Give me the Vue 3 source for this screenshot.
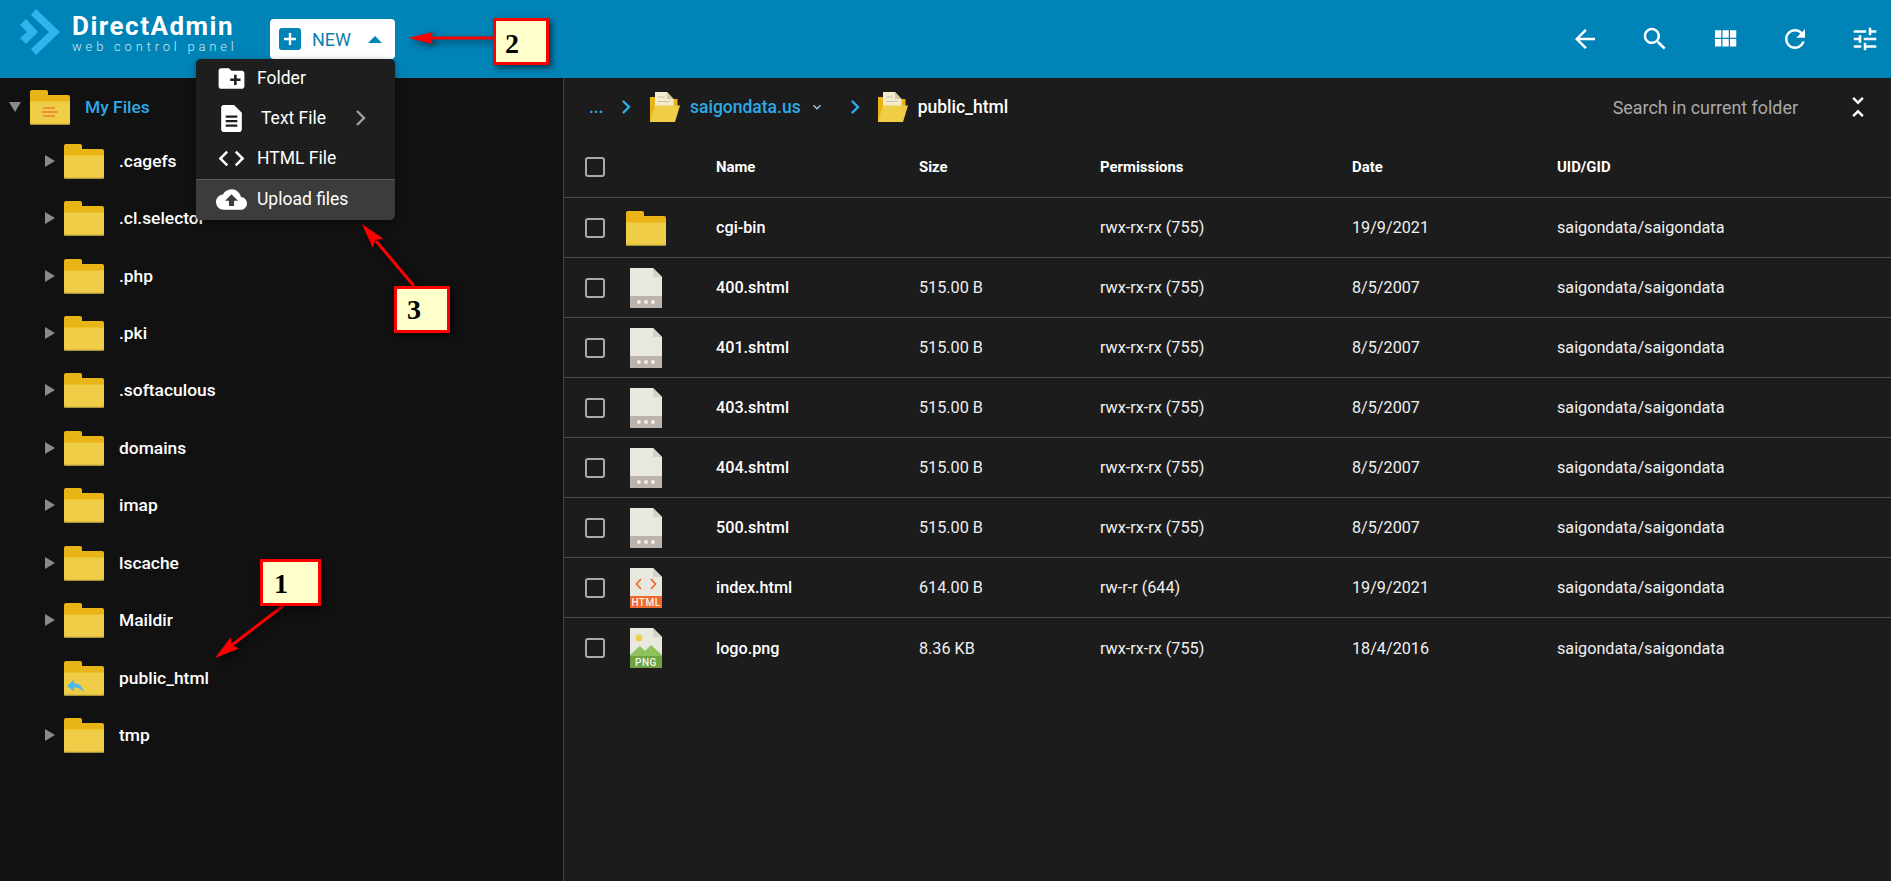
<script setup>
const tree = [
  { name: '.cagefs', arrow: true },
  { name: '.cl.selector', arrow: true },
  { name: '.php', arrow: true },
  { name: '.pki', arrow: true },
  { name: '.softaculous', arrow: true },
  { name: 'domains', arrow: true },
  { name: 'imap', arrow: true },
  { name: 'lscache', arrow: true },
  { name: 'Maildir', arrow: true },
  { name: 'public_html', arrow: false, link: true },
  { name: 'tmp', arrow: true },
]
const perm = 'rwx-rx-rx (755)'
const owner = 'saigondata/saigondata'
const rows = [
  { name: 'cgi-bin', type: 'folder', size: '', perm, date: '19/9/2021' },
  { name: '400.shtml', type: 'doc', size: '515.00 B', perm, date: '8/5/2007' },
  { name: '401.shtml', type: 'doc', size: '515.00 B', perm, date: '8/5/2007' },
  { name: '403.shtml', type: 'doc', size: '515.00 B', perm, date: '8/5/2007' },
  { name: '404.shtml', type: 'doc', size: '515.00 B', perm, date: '8/5/2007' },
  { name: '500.shtml', type: 'doc', size: '515.00 B', perm, date: '8/5/2007' },
  { name: 'index.html', type: 'html', size: '614.00 B', perm: 'rw-r-r (644)', date: '19/9/2021' },
  { name: 'logo.png', type: 'png', size: '8.36 KB', perm, date: '18/4/2016' },
]
const topIcons = [
  'M20 11H7.83l5.59-5.59L12 4l-8 8 8 8 1.41-1.41L7.83 13H20v-2z',
  'M15.5 14h-.79l-.28-.27C15.41 12.59 16 11.11 16 9.5 16 5.91 13.09 3 9.5 3S3 5.91 3 9.5 5.91 16 9.5 16c1.61 0 3.09-.59 4.23-1.57l.27.28v.79l5 4.99L20.49 19l-4.99-5zm-6 0C7.01 14 5 11.99 5 9.5S7.01 5 9.5 5 14 7.01 14 9.5 11.99 14 9.5 14z',
  'M4 11h5V5H4v6zm0 7h5v-6H4v6zm6 0h5v-6h-5v6zm6 0h5v-6h-5v6zm-6-7h5V5h-5v6zm6-6v6h5V5h-5z',
  'M17.65 6.35C16.2 4.9 14.21 4 12 4c-4.42 0-7.99 3.58-7.99 8s3.57 8 7.99 8c3.73 0 6.84-2.55 7.73-6h-2.08c-.82 2.33-3.04 4-5.65 4-3.31 0-6-2.69-6-6s2.69-6 6-6c1.66 0 3.14.69 4.22 1.78L13 11h7V4l-2.35 2.35z',
  'M3 17v2h6v-2H3zM3 5v2h10V5H3zm10 16v-2h8v-2h-8v-2h-2v6h2zM7 9v2H3v2h4v2h2V9H7zm14 4v-2H11v2h10zm-6-4h2V7h4V5h-4V3h-2v6z',
]
</script>

<template>
  <div class="page">
    <svg class="defs" width="0" height="0">
      <symbol id="folder" viewBox="0 0 40 36">
        <path d="M0 3a2 2 0 0 1 2-2h14a2 2 0 0 1 2 2v3h20a2 2 0 0 1 2 2v6H0z" fill="#e9b516" />
        <path d="M0 12.500h40V34a2 2 0 0 1-2 2H2a2 2 0 0 1-2-2z" fill="#f0cd47" />
        <path d="M0 34.800h40V35a1 1 0 0 1-1 1H1a1 1 0 0 1-1-1z" fill="#a8923a" />
      </symbol>
      <symbol id="open" viewBox="0 0 30 30">
        <path d="M0 30V5h5v25z" fill="#e9b516" />
        <path d="M23 7h4.500v8H23z" fill="#e9b516" />
        <path d="M5 0h12l6.500 7V20H5z" fill="#f5ebcf" />
        <path d="M17 0l6.500 7H17z" fill="#d9caa0" />
        <path d="M8 5h7M8 9.500h12" stroke="#c9c2ae" stroke-width="1" />
        <path d="M5 13.500h25L25 30H0z" fill="#f0cd47" />
      </symbol>
      <symbol id="paper" viewBox="0 0 32 40">
        <path d="M0 0h23l9 9v31H0z" fill="#e8e8df" />
        <path d="M23 0l9 9h-9z" fill="#d3d3c8" />
      </symbol>
    </svg>

    <header class="topbar">
      <div class="logo">
        <svg class="logo-mark" viewBox="0 0 40 46">
          <path d="M16 0L40 23 16 46 11 40 29 23 11 6z" fill="#2fb4ee" />
          <path d="M0 16L6 10 18 23 6 35 0 29 7 23z" fill="#2fb4ee" />
        </svg>
        <div class="logo-text">
          <div class="logo-name">DirectAdmin</div>
          <div class="logo-sub">web control panel</div>
        </div>
      </div>
      <div class="new-btn">
        <span class="plus">
          <svg viewBox="0 0 22 22" width="22" height="22"><path d="M11 5v12M5 11h12" stroke="#fff" stroke-width="2.400" /></svg>
        </span>
        <span class="new-label">NEW</span>
        <span class="caret-up"></span>
      </div>
      <div class="top-icons">
        <svg v-for="(d, i) in topIcons" :key="i" viewBox="0 0 24 24" width="30" height="30"><path :d="d" fill="#fff" /></svg>
      </div>
    </header>

    <div class="body">
      <aside class="side">
        <div class="root-row">
          <span class="tri-down"></span>
          <span class="folder-wrap">
            <svg width="40" height="36"><use href="#folder" /></svg>
            <svg class="folder-mark" width="40" height="36" viewBox="0 0 40 36">
              <path d="M13 19h12M11.500 23h16M13 27h12" stroke="#ef7c3a" stroke-width="1.600" />
            </svg>
          </span>
          <span class="root-name">My Files</span>
        </div>
        <div v-for="item in tree" :key="item.name" class="tree-row">
          <span class="tri-right" :class="{ hidden: !item.arrow }"></span>
          <span class="folder-wrap">
            <svg width="40" height="36"><use href="#folder" /></svg>
            <svg v-if="item.link" class="folder-mark" width="40" height="36" viewBox="0 0 40 36">
              <path d="M3 26l7-6.500v3.700c5 .2 8.500 3 10 9.300-2.500-3.500-5.500-5-10-5v4z" fill="#4cb8f0" />
            </svg>
          </span>
          <span class="tree-name">{{ item.name }}</span>
        </div>
      </aside>

      <main class="main">
        <div class="crumbs">
          <span class="dots">...</span>
          <svg class="chev" viewBox="0 0 24 24" width="28" height="28"><path d="M10 6L8.590 7.410 13.170 12l-4.580 4.590L10 18l6-6z" fill="#2ea9e8" /></svg>
          <svg class="crumb-folder" width="30" height="30"><use href="#open" /></svg>
          <span class="crumb-link">saigondata.us</span>
          <svg class="drop" viewBox="0 0 24 24" width="16" height="16"><path d="M16.590 8.590L12 13.170 7.410 8.590 6 10l6 6 6-6z" fill="#9ccbe6" /></svg>
          <svg class="chev chev2" viewBox="0 0 24 24" width="28" height="28"><path d="M10 6L8.590 7.410 13.170 12l-4.580 4.590L10 18l6-6z" fill="#2ea9e8" /></svg>
          <svg class="crumb-folder2" width="30" height="30"><use href="#open" /></svg>
          <span class="crumb-cur">public_html</span>
          <span class="search">Search in current folder</span>
          <svg class="fold" viewBox="0 0 24 24" width="30" height="30"><path d="M7.410 18.590L8.830 20 12 16.830 15.170 20l1.410-1.410L12 14l-4.590 4.590zm9.180-13.180L15.170 4 12 7.170 8.830 4 7.410 5.410 12 10l4.590-4.590z" fill="#fff" /></svg>
        </div>

        <div class="grid head">
          <span class="check"></span>
          <span></span>
          <span>Name</span>
          <span>Size</span>
          <span>Permissions</span>
          <span>Date</span>
          <span>UID/GID</span>
        </div>
        <div v-for="r in rows" :key="r.name" class="grid row">
          <span class="check"></span>
          <span class="icon-cell">
            <svg v-if="r.type === 'folder'" width="40" height="36"><use href="#folder" /></svg>
            <svg v-else class="file" width="32" height="40" viewBox="0 0 32 40">
              <use href="#paper" width="32" height="40" />
              <g v-if="r.type === 'doc'">
                <rect y="28" width="32" height="12" fill="#bdb3ad" />
                <circle cx="9" cy="34" r="2" fill="#efefe9" />
                <circle cx="16" cy="34" r="2" fill="#efefe9" />
                <circle cx="23" cy="34" r="2" fill="#efefe9" />
              </g>
              <g v-else-if="r.type === 'html'">
                <path d="M11 11l-4.500 5 4.500 5M21 11l4.500 5-4.500 5" fill="none" stroke="#ee6a2d" stroke-width="1.800" />
                <rect y="28" width="32" height="12" fill="#ee6a2d" />
                <text x="16" y="37.800" text-anchor="middle" class="band-text">HTML</text>
              </g>
              <g v-else>
                <circle cx="9" cy="10" r="3.400" fill="#f0cd47" />
                <path d="M0 27l10-9 5 5 6-6 11 10v1H0z" fill="#8fc15a" />
                <rect y="28" width="32" height="12" fill="#6ea33f" />
                <text x="16" y="37.800" text-anchor="middle" class="band-text">PNG</text>
              </g>
            </svg>
          </span>
          <span class="file-name">{{ r.name }}</span>
          <span class="cell">{{ r.size }}</span>
          <span class="cell">{{ r.perm }}</span>
          <span class="cell">{{ r.date }}</span>
          <span class="cell">{{ owner }}</span>
        </div>
      </main>
    </div>

    <div class="menu">
      <div class="mi first">
        <svg viewBox="0 0 24 24" width="31" height="31"><path d="M20 6h-8l-2-2H4c-1.110 0-1.990.890-1.990 2L2 18c0 1.110.890 2 2 2h16c1.110 0 2-.890 2-2V8c0-1.110-.890-2-2-2zm-1 8h-3v3h-2v-3h-3v-2h3V9h2v3h3v2z" fill="#fff" /></svg>
        <span>Folder</span>
      </div>
      <div class="mi">
        <svg viewBox="0 0 24 24" width="31" height="31"><path d="M6 1.500h8l6 6V20.500c0 1.100-.9 2-2 2H6c-1.100 0-2-.9-2-2v-17c0-1.100.9-2 2-2z" fill="#fff" /><path d="M7.500 10.500h9M7.500 14h9M7.500 17.500h9" stroke="#1e1e1e" stroke-width="1.700" /></svg>
        <span class="shift">Text File</span>
        <svg class="mi-chev" viewBox="0 0 12 18" width="12" height="18"><path d="M2 2l7 7-7 7" fill="none" stroke="#a0a0a0" stroke-width="2.400" /></svg>
      </div>
      <div class="mi">
        <svg viewBox="0 0 24 24" width="31" height="31"><path d="M9.400 16.600L4.800 12l4.600-4.600L8 6l-6 6 6 6 1.400-1.400zm5.200 0l4.600-4.600-4.600-4.600L16 6l6 6-6 6-1.400-1.400z" fill="#fff" /></svg>
        <span>HTML File</span>
      </div>
      <div class="mi active">
        <svg viewBox="0 0 24 24" width="31" height="31"><path d="M19.350 10.040C18.670 6.590 15.640 4 12 4 9.110 4 6.600 5.640 5.350 8.040 2.340 8.360 0 10.910 0 14c0 3.310 2.690 6 6 6h13c2.760 0 5-2.240 5-5 0-2.640-2.050-4.780-4.650-4.960zM14 13v4h-4v-4H7l5-5 5 5h-3z" fill="#fff" /></svg>
        <span>Upload files</span>
      </div>
    </div>

    <svg class="arrows" width="1891" height="881" viewBox="0 0 1891 881">
      <g class="arrow-set">
        <path d="M493 38H430" stroke="#f00" stroke-width="3" />
        <path d="M408 38L433 32 430 38 433 44z" fill="#f00" />
        <path d="M414 286L376 241" stroke="#f00" stroke-width="3" />
        <path d="M362 224L383.400 238.700 375.500 240.100 372.700 247.700z" fill="#f00" />
        <path d="M283 606L232 645" stroke="#f00" stroke-width="3" />
        <path d="M215 658L239.100 648.400 231.700 645.300 230.700 637.200z" fill="#f00" />
      </g>
    </svg>
    <div class="note note1">1</div>
    <div class="note note2">2</div>
    <div class="note note3">3</div>
  </div>
</template>

<style scoped>
.page {
  position: relative;
  width: 1891px;
  height: 881px;
  overflow: hidden;
  background: #1c1c1c;
  color: #fff;
  font-family: Roboto, "Noto Sans", sans-serif;
  font-size: 16px;
}
.defs { position: absolute; }
.topbar {
  height: 78px;
  background: #0083b6;
  display: flex;
  align-items: center;
}
.logo {
  display: flex;
  align-items: center;
  width: 270px;
  padding-left: 20px;
  box-sizing: border-box;
  flex: none;
}
.logo-mark { width: 40px; height: 46px; margin-right: 12px; margin-bottom: 14px; flex: none; }
.logo-text { margin-bottom: 12px; }
.logo-name {
  font-size: 26px;
  font-weight: 700;
  line-height: 27px;
  letter-spacing: 1.500px;
  white-space: nowrap;
}
.logo-sub {
  font-size: 13px;
  font-weight: 300;
  line-height: 14px;
  letter-spacing: 3.800px;
  color: #cfe8f3;
  white-space: nowrap;
}
.new-btn {
  width: 125px;
  height: 40px;
  background: #fff;
  border-radius: 4px;
  display: flex;
  align-items: center;
  padding-left: 9px;
  box-sizing: border-box;
  color: #0f7fb0;
  flex: none;
}
.plus {
  width: 22px;
  height: 22px;
  background: #0083b6;
  border-radius: 3px;
  display: block;
}
.new-label { margin-left: 11px; font-size: 18px; font-weight: 400; }
.caret-up {
  margin-left: 17px;
  width: 0;
  height: 0;
  border-left: 7px solid transparent;
  border-right: 7px solid transparent;
  border-bottom: 7px solid #0083b6;
}
.top-icons {
  margin-left: auto;
  padding-right: 11px;
  display: flex;
  gap: 40px;
}
.body { display: flex; height: 803px; }
.side {
  width: 563px;
  flex: none;
  background: #111;
  border-right: 1px solid #444;
  box-sizing: content-box;
}
.root-row {
  height: 51px;
  padding-top: 3px;
  display: flex;
  align-items: center;
  padding-left: 9px;
}
.tri-down {
  width: 0;
  height: 0;
  border-left: 6px solid transparent;
  border-right: 6px solid transparent;
  border-top: 10px solid #8a8a8a;
  margin-right: 9px;
}
.folder-wrap { position: relative; width: 40px; height: 36px; display: block; flex: none; }
.folder-wrap svg { display: block; }
.folder-mark { position: absolute; left: 0; top: 0; }
.root-name { margin-left: 15px; color: #2ea9e8; font-weight: 500; font-size: 17.400px; }
.tree-row {
  height: 57.430px;
  display: flex;
  align-items: center;
  padding-left: 45px;
}
.tri-right {
  width: 0;
  height: 0;
  border-top: 6px solid transparent;
  border-bottom: 6px solid transparent;
  border-left: 10px solid #8a8a8a;
  margin-right: 9px;
}
.tri-right.hidden { visibility: hidden; }
.tree-name { margin-left: 15px; font-weight: 500; font-size: 17.400px; }
.main { flex: 1; min-width: 0; background: #1c1c1c; }
.crumbs {
  height: 58px;
  display: flex;
  align-items: center;
  padding-left: 25px;
  padding-right: 18px;
  font-size: 17.500px;
  font-weight: 500;
}
.dots { color: #2ea9e8; width: 23px; }
.chev { flex: none; }
.crumb-folder { margin-left: 10px; flex: none; }
.crumb-link { margin-left: 10px; color: #2ea9e8; }
.drop { margin-left: 8px; flex: none; }
.chev2 { margin-left: 16px; }
.crumb-folder2 { margin-left: 9px; flex: none; }
.crumb-cur { margin-left: 10px; }
.search { margin-left: auto; margin-right: 45px; color: #aaa; font-weight: 400; font-size: 17.900px; }
.grid {
  display: grid;
  grid-template-columns: 41px 90px 203px 181px 252px 205px 1fr;
  padding-left: 21px;
  align-items: center;
  box-sizing: border-box;
}
.head {
  height: 62px;
  padding-top: 1px;
  border-bottom: 1px solid #4d4d4d;
  font-size: 14.900px;
  font-weight: 700;
}
.head .check { margin-top: -1px; }
.row {
  height: 60px;
  border-bottom: 1px solid #4d4d4d;
  font-size: 16.200px;
}
.row:last-child { border-bottom: none; }
.check {
  width: 20px;
  height: 20px;
  box-sizing: border-box;
  border: 2px solid #aaa;
  border-radius: 3px;
  display: block;
}
.icon-cell { display: flex; align-items: center; height: 40px; }
.icon-cell svg { display: block; }
.file { margin-left: 4px; }
.file-name { font-weight: 500; }
.cell { font-weight: 400; color: #f0f0f0; }
.band-text {
  font-family: Roboto, sans-serif;
  font-size: 10px;
  font-weight: 500;
  letter-spacing: .5px;
  fill: #f6f6f0;
}
.menu {
  position: absolute;
  left: 196px;
  top: 59px;
  width: 199px;
  height: 161px;
  background: #1e1e1e;
  border-radius: 5px;
  overflow: hidden;
  font-size: 17.500px;
  box-shadow: 0 2px 6px rgba(0, 0, 0, .4);
}
.mi {
  height: 40px;
  display: flex;
  align-items: center;
  padding-left: 20px;
}
.first { margin-top: -1px; }
.mi svg { flex: none; }
.mi span { margin-left: 10px; }
.mi .shift { margin-left: 14px; }
.mi .mi-chev { margin-left: 29px; }
.active {
  background: #3c3c3c;
  border-top: 1px solid #5a5a5a;
  margin-top: 1px;
  height: 41px;
  padding-bottom: 2px;
  box-sizing: border-box;
}
.arrows { position: absolute; left: 0; top: 0; pointer-events: none; }
.arrow-set { filter: drop-shadow(3px 3px 3px rgba(0, 0, 0, .55)); }
.note {
  position: absolute;
  width: 56px;
  height: 47px;
  box-sizing: border-box;
  border: 3px solid #f00;
  background: #ffffcc;
  color: #000;
  font-family: "Liberation Serif", serif;
  font-weight: 700;
  font-size: 28px;
  line-height: 41px;
  padding-left: 10px;
  box-shadow: 3px 3px 6px rgba(0, 0, 0, .55);
}
.note1 { left: 260px; top: 559px; width: 61px; padding-left: 11px; padding-top: 1px; }
.note2 { left: 493px; top: 18px; padding-left: 9px; padding-top: 2px; }
.note3 { left: 394px; top: 286px; }
</style>

<style>
html, body { margin: 0; background: #1c1c1c; }
</style>
